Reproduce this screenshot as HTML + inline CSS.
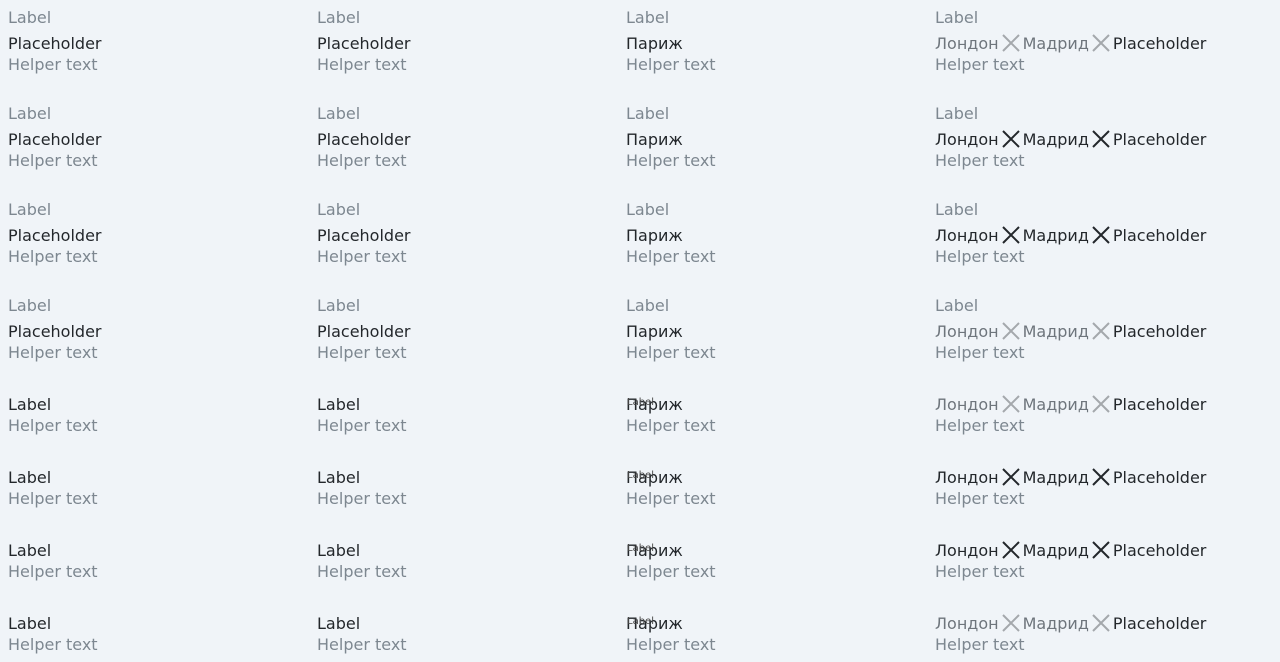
<!DOCTYPE html><html><head><meta charset="utf-8"><style>
body{margin:0;width:1280px;height:662px;background:#f0f4f8;font-family:"DejaVu Sans","Liberation Sans",sans-serif;font-size:16px;color:#23272b;position:relative;overflow:hidden}
.a{position:absolute;white-space:nowrap;line-height:20px;margin-top:1px}
.l,.h{color:#7d8790}
.s{font-size:10px;line-height:12px;color:#444}
.g{color:#6e757c}
.x{display:inline-block;width:18px;height:18px;vertical-align:-3px;margin:0 3px}
.x path{stroke:#23272b;stroke-width:2}
.d .x path{stroke:#a4a8ac}
</style></head><body>
<div class="a l" style="left:8px;top:7px">Label</div><div class="a" style="left:8px;top:33px">Placeholder</div><div class="a h" style="left:8px;top:54px">Helper text</div>
<div class="a l" style="left:317px;top:7px">Label</div><div class="a" style="left:317px;top:33px">Placeholder</div><div class="a h" style="left:317px;top:54px">Helper text</div>
<div class="a l" style="left:626px;top:7px">Label</div><div class="a" style="left:626px;top:33px">Париж</div><div class="a h" style="left:626px;top:54px">Helper text</div>
<div class="a l" style="left:935px;top:7px">Label</div><div class="a d" style="left:935px;top:33px"><span class="g">Лондон</span><svg class="x" viewBox="0 0 18 18"><path d="M1 1L17 17M17 1L1 17"/></svg><span class="g">Мадрид</span><svg class="x" viewBox="0 0 18 18"><path d="M1 1L17 17M17 1L1 17"/></svg>Placeholder</div><div class="a h" style="left:935px;top:54px">Helper text</div>

<div class="a l" style="left:8px;top:103px">Label</div><div class="a" style="left:8px;top:129px">Placeholder</div><div class="a h" style="left:8px;top:150px">Helper text</div>
<div class="a l" style="left:317px;top:103px">Label</div><div class="a" style="left:317px;top:129px">Placeholder</div><div class="a h" style="left:317px;top:150px">Helper text</div>
<div class="a l" style="left:626px;top:103px">Label</div><div class="a" style="left:626px;top:129px">Париж</div><div class="a h" style="left:626px;top:150px">Helper text</div>
<div class="a l" style="left:935px;top:103px">Label</div><div class="a" style="left:935px;top:129px">Лондон<svg class="x" viewBox="0 0 18 18"><path d="M1 1L17 17M17 1L1 17"/></svg>Мадрид<svg class="x" viewBox="0 0 18 18"><path d="M1 1L17 17M17 1L1 17"/></svg>Placeholder</div><div class="a h" style="left:935px;top:150px">Helper text</div>

<div class="a l" style="left:8px;top:199px">Label</div><div class="a" style="left:8px;top:225px">Placeholder</div><div class="a h" style="left:8px;top:246px">Helper text</div>
<div class="a l" style="left:317px;top:199px">Label</div><div class="a" style="left:317px;top:225px">Placeholder</div><div class="a h" style="left:317px;top:246px">Helper text</div>
<div class="a l" style="left:626px;top:199px">Label</div><div class="a" style="left:626px;top:225px">Париж</div><div class="a h" style="left:626px;top:246px">Helper text</div>
<div class="a l" style="left:935px;top:199px">Label</div><div class="a" style="left:935px;top:225px">Лондон<svg class="x" viewBox="0 0 18 18"><path d="M1 1L17 17M17 1L1 17"/></svg>Мадрид<svg class="x" viewBox="0 0 18 18"><path d="M1 1L17 17M17 1L1 17"/></svg>Placeholder</div><div class="a h" style="left:935px;top:246px">Helper text</div>

<div class="a l" style="left:8px;top:295px">Label</div><div class="a" style="left:8px;top:321px">Placeholder</div><div class="a h" style="left:8px;top:342px">Helper text</div>
<div class="a l" style="left:317px;top:295px">Label</div><div class="a" style="left:317px;top:321px">Placeholder</div><div class="a h" style="left:317px;top:342px">Helper text</div>
<div class="a l" style="left:626px;top:295px">Label</div><div class="a" style="left:626px;top:321px">Париж</div><div class="a h" style="left:626px;top:342px">Helper text</div>
<div class="a l" style="left:935px;top:295px">Label</div><div class="a d" style="left:935px;top:321px"><span class="g">Лондон</span><svg class="x" viewBox="0 0 18 18"><path d="M1 1L17 17M17 1L1 17"/></svg><span class="g">Мадрид</span><svg class="x" viewBox="0 0 18 18"><path d="M1 1L17 17M17 1L1 17"/></svg>Placeholder</div><div class="a h" style="left:935px;top:342px">Helper text</div>

<div class="a" style="left:8px;top:394px">Label</div><div class="a h" style="left:8px;top:415px">Helper text</div>
<div class="a" style="left:317px;top:394px">Label</div><div class="a h" style="left:317px;top:415px">Helper text</div>
<div class="a" style="left:626px;top:394px">Париж</div><div class="a s" style="left:627px;top:396px">Label</div><div class="a h" style="left:626px;top:415px">Helper text</div>
<div class="a d" style="left:935px;top:394px"><span class="g">Лондон</span><svg class="x" viewBox="0 0 18 18"><path d="M1 1L17 17M17 1L1 17"/></svg><span class="g">Мадрид</span><svg class="x" viewBox="0 0 18 18"><path d="M1 1L17 17M17 1L1 17"/></svg>Placeholder</div><div class="a h" style="left:935px;top:415px">Helper text</div>

<div class="a" style="left:8px;top:467px">Label</div><div class="a h" style="left:8px;top:488px">Helper text</div>
<div class="a" style="left:317px;top:467px">Label</div><div class="a h" style="left:317px;top:488px">Helper text</div>
<div class="a" style="left:626px;top:467px">Париж</div><div class="a s" style="left:627px;top:469px">Label</div><div class="a h" style="left:626px;top:488px">Helper text</div>
<div class="a" style="left:935px;top:467px">Лондон<svg class="x" viewBox="0 0 18 18"><path d="M1 1L17 17M17 1L1 17"/></svg>Мадрид<svg class="x" viewBox="0 0 18 18"><path d="M1 1L17 17M17 1L1 17"/></svg>Placeholder</div><div class="a h" style="left:935px;top:488px">Helper text</div>

<div class="a" style="left:8px;top:540px">Label</div><div class="a h" style="left:8px;top:561px">Helper text</div>
<div class="a" style="left:317px;top:540px">Label</div><div class="a h" style="left:317px;top:561px">Helper text</div>
<div class="a" style="left:626px;top:540px">Париж</div><div class="a s" style="left:627px;top:542px">Label</div><div class="a h" style="left:626px;top:561px">Helper text</div>
<div class="a" style="left:935px;top:540px">Лондон<svg class="x" viewBox="0 0 18 18"><path d="M1 1L17 17M17 1L1 17"/></svg>Мадрид<svg class="x" viewBox="0 0 18 18"><path d="M1 1L17 17M17 1L1 17"/></svg>Placeholder</div><div class="a h" style="left:935px;top:561px">Helper text</div>

<div class="a" style="left:8px;top:613px">Label</div><div class="a h" style="left:8px;top:634px">Helper text</div>
<div class="a" style="left:317px;top:613px">Label</div><div class="a h" style="left:317px;top:634px">Helper text</div>
<div class="a" style="left:626px;top:613px">Париж</div><div class="a s" style="left:627px;top:615px">Label</div><div class="a h" style="left:626px;top:634px">Helper text</div>
<div class="a d" style="left:935px;top:613px"><span class="g">Лондон</span><svg class="x" viewBox="0 0 18 18"><path d="M1 1L17 17M17 1L1 17"/></svg><span class="g">Мадрид</span><svg class="x" viewBox="0 0 18 18"><path d="M1 1L17 17M17 1L1 17"/></svg>Placeholder</div><div class="a h" style="left:935px;top:634px">Helper text</div>
</body></html>
